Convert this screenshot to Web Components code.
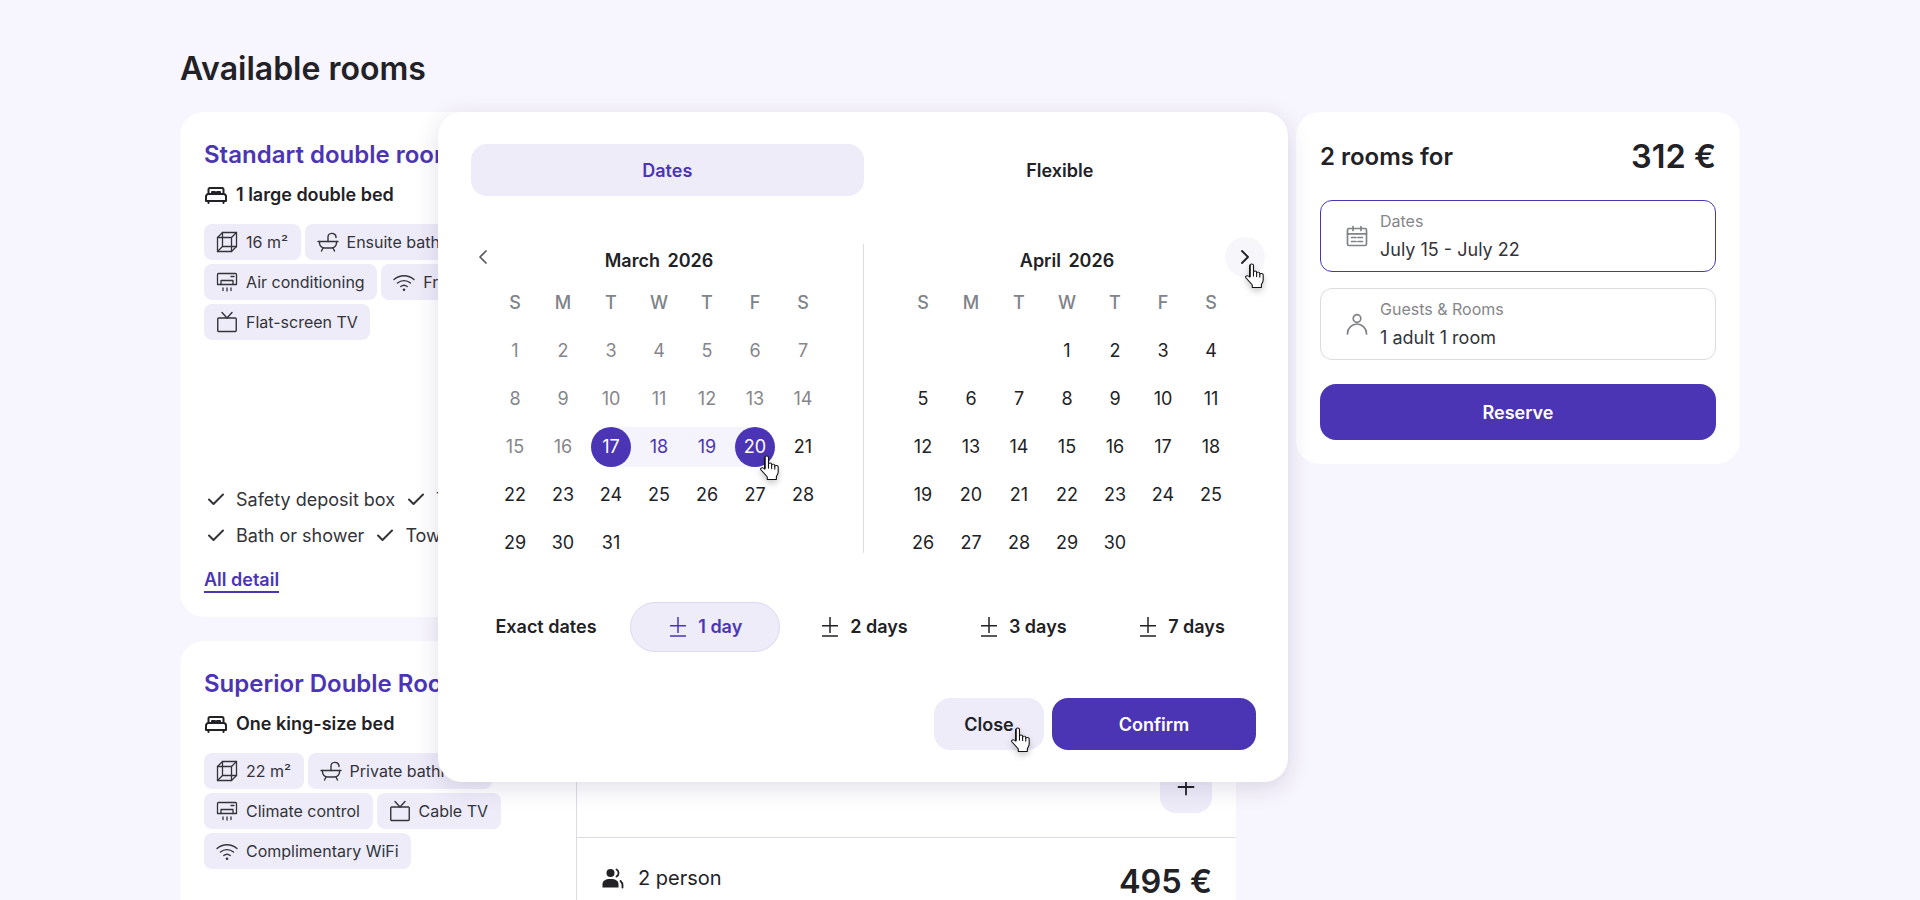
<!DOCTYPE html>
<html lang="en">
<head>
<meta charset="utf-8">
<title>Available rooms</title>
<style>
  html, body {
    margin: 0;
    height: 900px;
    overflow: hidden;
    background: #f7f5fd;
    font-family: Inter, "Liberation Sans", sans-serif;
    color: #222226;
  }
</style>
</head>
<body>
<rooms-page>
  <room-card slot="rooms" name="Standart double room" bed="1 large double bed" tall>
    <room-chip icon="cube">16 m²</room-chip>
    <room-chip icon="bath">Ensuite bathroom</room-chip>
    <room-chip icon="ac">Air conditioning</room-chip>
    <room-chip icon="wifi">Free WiFi</room-chip>
    <room-chip icon="tv">Flat-screen TV</room-chip>
    <room-feature slot="features">Safety deposit box</room-feature>
    <room-feature slot="features">TV</room-feature>
    <room-feature slot="features">Bath or shower</room-feature>
    <room-feature slot="features">Towels</room-feature>
    <rate-row slot="rates"></rate-row>
    <rate-row slot="rates"></rate-row>
  </room-card>
  <room-card slot="rooms" name="Superior Double Room" bed="One king-size bed">
    <room-chip icon="cube">22 m²</room-chip>
    <room-chip icon="bath">Private bathroom</room-chip>
    <room-chip icon="ac">Climate control</room-chip>
    <room-chip icon="tv">Cable TV</room-chip>
    <room-chip icon="wifi">Complimentary WiFi</room-chip>
    <rate-row slot="rates"></rate-row>
    <rate-row slot="rates" people="2 person" price="495 €"></rate-row>
  </room-card>
  <booking-summary slot="side"></booking-summary>
  <date-modal slot="overlay"></date-modal>
</rooms-page>

<script>
const ICONS = {
  bed: `<g stroke-width="2"><path d="M4.500 11V6.500A1.500 1.500 0 0 1 6 5h12a1.500 1.500 0 0 1 1.500 1.500V11"/><path d="M8 11V9h3v2M13 11V9h3v2"/><path d="M2 18v-4.500A2.500 2.500 0 0 1 4.500 11h15a2.500 2.500 0 0 1 2.500 2.500V18z"/><path d="M4.500 18v2M19.500 18v2"/></g>`,
  cube: `<g stroke-width="1.300"><path d="M2.500 7.500h14v14h-14zM7.500 2.500h14v14h-14z"/><path d="M2.500 7.500l5-5M16.500 7.500l5-5M2.500 21.500l5-5M16.500 21.500l5-5"/></g>`,
  bath: `<g stroke-width="1.400"><path d="M2 11.500h20"/><path d="M3.500 11.500v1.500a5 5 0 0 0 5 5h7a5 5 0 0 0 5-5v-1.500"/><path d="M7 18l-1.500 3M17 18l1.500 3"/><path d="M12 11.500V7c0-4.500 7-5 8 -.5v1"/></g>`,
  ac: `<g stroke-width="1.300"><path d="M2.500 4.500a1 1 0 0 1 1-1h17a1 1 0 0 1 1 1v10h-19z"/><path d="M6 14.500v-4h12v4M16 6.500h3"/><path d="M8 18v2.500M12 18v3M16 18v2.500"/></g>`,
  wifi: `<g stroke-width="1.400"><path d="M2 9.500a15 15 0 0 1 20 0M5.500 13a10 10 0 0 1 13 0M8.800 16.500a5 5 0 0 1 6.400 0"/></g><circle cx="12" cy="19.800" r="1.300" fill="currentColor" stroke="none"/>`,
  tv: `<g stroke-width="1.400"><rect x="2.750" y="8" width="18.500" height="13.500" rx="1"/><path d="M7 2.500l5 5.500 5-5.500"/></g>`,
  check: `<path stroke-width="2" d="M5 12.500l4.500 4.500L19 7.500"/>`,
  calendar: `<g stroke-width="1.700"><rect x="2.500" y="4.500" width="19" height="17" rx="1.500"/><path d="M2.500 9.800h19M8 2.500v4M16 2.500v4M6.500 13.500h4.500M13 13.500h4.500M6.500 17.500h4.500M13 17.500h4.500"/></g>`,
  person: `<g stroke-width="1.700"><circle cx="12" cy="6.500" r="3.800"/><path d="M2.500 22v-.5a9.500 9.500 0 0 1 19 0v.5"/></g>`,
  people: `<g fill="currentColor" stroke="none"><circle cx="9.500" cy="7" r="4"/><path d="M1.500 21.500v-3.500c0-3 2.700-5 8-5s8 2 8 5v3.500z"/></g><path stroke-width="1.800" d="M15.500 3.500a4 4 0 0 1 0 7M19.500 15c1.200 1.200 2 2.500 2 4v2.500"/>`,
  plus: `<path stroke-width="1.800" d="M4.500 12h15M12 4.500v15"/>`,
  prev: `<path stroke-width="1.700" d="M15 6l-6 6 6 6"/>`,
  next: `<path stroke-width="1.900" d="M9 6l6 6-6 6"/>`
};

class AppIcon extends HTMLElement {
  constructor() {
    super();
    this.attachShadow({ mode: "open" });
  }

  connectedCallback() {
    const size = this.getAttribute("size") || 24;
    this.shadowRoot.innerHTML = /* html */`
    <style>
      :host { display: block; flex: none; width: ${size}px; height: ${size}px; }
      svg { display: block; fill: none; stroke: currentColor; stroke-linecap: round; stroke-linejoin: round; }
    </style>
    <svg width="${size}" height="${size}" viewBox="0 0 24 24">${ICONS[this.getAttribute("name")]}</svg>`;
  }
}

class RoomsPage extends HTMLElement {
  constructor() {
    super();
    this.attachShadow({ mode: "open" });
  }

  connectedCallback() {
    this.shadowRoot.innerHTML = /* html */`
    <style>
      :host {
        display: block;
        position: relative;
        box-sizing: border-box;
        height: 900px;
        padding: 49px 180px 0;
        overflow: hidden;
      }

      h1 {
        margin: 0 0 23px;
        font-size: 32px;
        line-height: 40px;
        font-weight: 600;
      }

      .layout {
        display: grid;
        grid-template-columns: 1056px 444px;
        column-gap: 60px;
        align-items: start;
      }

      .rooms {
        display: flex;
        flex-direction: column;
        gap: 24px;
      }
    </style>
    <h1>Available rooms</h1>
    <div class="layout">
      <div class="rooms"><slot name="rooms"></slot></div>
      <slot name="side"></slot>
    </div>
    <slot name="overlay"></slot>`;
  }
}

class RoomCard extends HTMLElement {
  constructor() {
    super();
    this.attachShadow({ mode: "open" });
  }

  connectedCallback() {
    this.shadowRoot.innerHTML = /* html */`
    <style>
      :host {
        display: grid;
        grid-template-columns: 396px 1fr;
        background: #fff;
        border-radius: 24px;
        ${this.hasAttribute("tall") ? "min-height: 505px;" : ""}
      }

      .info {
        display: flex;
        flex-direction: column;
        padding: 24px;
        box-sizing: border-box;
      }

      h2 {
        margin: 0;
        font-size: 24px;
        line-height: 38px;
        font-weight: 600;
        color: #4b35b5;
        white-space: nowrap;
      }

      .bed {
        display: flex;
        align-items: center;
        gap: 8px;
        margin-top: 9px;
        font-size: 18px;
        line-height: 24px;
        font-weight: 600;
      }

      .chips {
        display: flex;
        flex-wrap: wrap;
        gap: 4px;
        margin-top: 17px;
      }

      .details { margin-top: auto; }

      .features {
        display: flex;
        flex-wrap: wrap;
        column-gap: 9px;
      }

      a {
        display: inline-block;
        margin-top: 16px;
        color: #4b35b5;
        font-size: 18px;
        line-height: 22px;
        font-weight: 600;
        border-bottom: 2px solid #4b35b5;
      }

      .rates {
        display: flex;
        flex-direction: column;
        border-left: 1px solid #dcdce4;
      }
    </style>
    <div class="info">
      <h2>${this.getAttribute("name")}</h2>
      <div class="bed"><app-icon name="bed"></app-icon>${this.getAttribute("bed")}</div>
      <div class="chips"><slot></slot></div>
      <div class="details" ${this.querySelector("room-feature") ? "" : "hidden"}>
        <div class="features"><slot name="features"></slot></div>
        <a>All detail</a>
      </div>
    </div>
    <div class="rates"><slot name="rates"></slot></div>`;
  }
}

class RoomChip extends HTMLElement {
  constructor() {
    super();
    this.attachShadow({ mode: "open" });
  }

  connectedCallback() {
    this.shadowRoot.innerHTML = /* html */`
    <style>
      :host {
        display: inline-flex;
        align-items: center;
        gap: 7px;
        box-sizing: border-box;
        height: 36px;
        padding: 0 12.5px 0 11px;
        border-radius: 8px;
        background: #eeecf9;
        color: #33343a;
        font-size: 16px;
        white-space: nowrap;
      }
    </style>
    <app-icon name="${this.getAttribute("icon")}"></app-icon><slot></slot>`;
  }
}

class RoomFeature extends HTMLElement {
  constructor() {
    super();
    this.attachShadow({ mode: "open" });
  }

  connectedCallback() {
    this.shadowRoot.innerHTML = /* html */`
    <style>
      :host {
        display: inline-flex;
        align-items: center;
        gap: 8px;
        height: 36px;
        font-size: 18px;
        color: #33343a;
      }
    </style>
    <app-icon name="check"></app-icon><slot></slot>`;
  }
}

class RateRow extends HTMLElement {
  constructor() {
    super();
    this.attachShadow({ mode: "open" });
  }

  connectedCallback() {
    const people = this.getAttribute("people");
    const top = people ? /* html */`
      <div class="people"><app-icon name="people"></app-icon>${people}</div>
      <div class="price">${this.getAttribute("price")}</div>` : "";

    this.shadowRoot.innerHTML = /* html */`
    <style>
      :host {
        display: flex;
        flex-direction: column;
        justify-content: space-between;
        box-sizing: border-box;
        height: 197px;
        padding: 24px;
        border-bottom: 1px solid #dcdce4;
      }

      .top {
        display: flex;
        justify-content: space-between;
        align-items: flex-start;
      }

      .people {
        display: flex;
        align-items: center;
        gap: 13px;
        height: 32px;
        font-size: 20px;
      }

      .price {
        margin-top: 3px;
        font-size: 32.5px;
        line-height: 34px;
        font-weight: 600;
      }

      .add {
        align-self: flex-end;
        display: grid;
        place-items: center;
        width: 52px;
        height: 52px;
        border-radius: 16px;
        background: #eeecf9;
      }
    </style>
    <div class="top">${top}</div>
    <div class="add"><app-icon name="plus"></app-icon></div>`;
  }
}

class BookingField extends HTMLElement {
  constructor() {
    super();
    this.attachShadow({ mode: "open" });
  }

  connectedCallback() {
    const active = this.hasAttribute("active");
    this.shadowRoot.innerHTML = /* html */`
    <style>
      :host {
        display: flex;
        align-items: center;
        gap: 11px;
        box-sizing: border-box;
        height: 72px;
        padding: 0 24px;
        border: 1px solid ${active ? "#4b35b5" : "#dcdce4"};
        border-radius: 12px;
      }

      app-icon { color: #808388; }

      .label {
        font-size: 16px;
        line-height: 20px;
        color: #85868a;
      }

      .value {
        margin-top: 8px;
        font-size: 18px;
        line-height: 22px;
        color: #33343a;
      }
    </style>
    <app-icon name="${this.getAttribute("icon")}"></app-icon>
    <div>
      <div class="label">${this.getAttribute("label")}</div>
      <div class="value">${this.getAttribute("value")}</div>
    </div>`;
  }
}

class BookingSummary extends HTMLElement {
  constructor() {
    super();
    this.attachShadow({ mode: "open" });
  }

  connectedCallback() {
    this.shadowRoot.innerHTML = /* html */`
    <style>
      :host {
        display: flex;
        flex-direction: column;
        gap: 16px;
        box-sizing: border-box;
        padding: 24px;
        background: #fff;
        border-radius: 24px;
      }

      .head {
        display: flex;
        justify-content: space-between;
        align-items: center;
        padding-top: 1px;
        margin-bottom: 7px;
        font-weight: 600;
      }

      .for { font-size: 24px; line-height: 40px; }
      .total { font-size: 32.5px; line-height: 40px; }

      button {
        height: 56px;
        margin-top: 8px;
        border: 0;
        border-radius: 16px;
        background: #4b35b5;
        color: #fff;
        font: 600 18px Inter, sans-serif;
      }
    </style>
    <div class="head"><span class="for">2 rooms for</span><span class="total">312 €</span></div>
    <booking-field active icon="calendar" label="Dates" value="July 15 - July 22"></booking-field>
    <booking-field icon="person" label="Guests &amp; Rooms" value="1 adult 1 room"></booking-field>
    <button>Reserve</button>`;
  }
}

class CalMonth extends HTMLElement {
  constructor() {
    super();
    this.attachShadow({ mode: "open" });
  }

  connectedCallback() {
    const blanks = Number(this.getAttribute("blanks") || 0);
    const total = Number(this.getAttribute("total"));
    const past = Number(this.getAttribute("past") || 0);
    const from = Number(this.getAttribute("from") || 0);
    const to = Number(this.getAttribute("to") || 0);
    const heads = ["S", "M", "T", "W", "T", "F", "S"].map(d => `<div class="cell head">${d}</div>`).join("");
    const empty = "<div class=\"cell\"></div>".repeat(blanks);
    let days = "";

    for (let d = 1; d <= total; d++) {
      const classes = ["cell"];
      if (d <= past) classes.push("past");
      if (d === from) classes.push("from");
      if (d === to) classes.push("to");
      if (d > from && d < to) classes.push("range");
      days += `<div class="${classes.join(" ")}"><span>${d}</span></div>`;
    }

    this.shadowRoot.innerHTML = /* html */`
    <style>
      :host {
        display: block;
        width: 336px;
        padding-top: 5px;
      }

      .title {
        height: 24px;
        margin-bottom: 5.5px;
        text-align: center;
        font-size: 18px;
        line-height: 24px;
        font-weight: 600;
        word-spacing: 3px;
      }

      .grid {
        display: grid;
        grid-template-columns: repeat(7, 48px);
        grid-auto-rows: 48px;
      }

      .cell {
        position: relative;
        display: grid;
        place-items: center;
        font-size: 18px;
        color: #222226;
      }

      .cell span {
        position: relative;
        display: grid;
        place-items: center;
        width: 40px;
        height: 40px;
        border-radius: 50%;
      }

      .head { color: #808388; font-weight: 500; }
      .past { color: #85868a; }

      .range::before, .from::before, .to::before {
        content: "";
        position: absolute;
        top: 4px;
        bottom: 4px;
        left: 0;
        right: 0;
        background: #f5f3fc;
      }

      .from::before { left: 50%; }
      .to::before { right: 50%; }
      .range { color: #4b35b5; }
      .from span, .to span { background: #4b35b5; color: #fff; }
    </style>
    <div class="title">${this.getAttribute("title")}</div>
    <div class="grid">${heads}${empty}${days}</div>`;
  }
}

class HandCursor extends HTMLElement {
  constructor() {
    super();
    this.attachShadow({ mode: "open" });
  }

  connectedCallback() {
    this.shadowRoot.innerHTML = /* html */`
    <style>
      :host {
        position: absolute;
        left: ${this.getAttribute("x")}px;
        top: ${this.getAttribute("y")}px;
        width: 20px;
        height: 26px;
        filter: drop-shadow(0 3px 3px rgba(0, 0, 0, .22));
      }

      svg { display: block; }
    </style>
    <svg width="20" height="26" viewBox="1.500 0 16.500 25.500" preserveAspectRatio="none" fill="#fff" stroke="#111" stroke-width=".9" stroke-linejoin="round" stroke-linecap="round">
      <path d="M5.500 2.500c0-2 3-2 3 0V9c0-1.500 2.600-1.500 2.600 0v1c0-1.400 2.600-1.400 2.600.2v1c0-1.300 2.800-1.200 2.800.4v5c0 2-.7 3-1.500 4.400v3H7.500v-2.500c-1-1.500-2.500-3.300-5-6.500-1.300-1.700.6-3.200 2-2l1 1z"/>
      <path d="M8.500 9v4M11.100 10v3.500M13.700 11v3" fill="none"/>
      <path d="M5.500 2.500V13" fill="none" stroke-width="1.300"/>
    </svg>`;
  }
}

class DateModal extends HTMLElement {
  constructor() {
    super();
    this.attachShadow({ mode: "open" });
  }

  connectedCallback() {
    const pm = `<svg class="pm" width="16" height="20" viewBox="0 0 16 20" fill="none" stroke="currentColor" stroke-width="1.500"><path d="M8 0v16M0 8.750h16M0 19h16"/></svg>`;
    this.shadowRoot.innerHTML = /* html */`
    <style>
      :host {
        position: absolute;
        left: 438px;
        top: 112px;
        width: 850px;
        box-sizing: border-box;
        padding: 32px 32px 32px 33px;
        background: #fff;
        border-radius: 24px;
        box-shadow: 0 6px 24px rgba(40, 30, 90, .14);
      }

      .tabs {
        display: grid;
        grid-template-columns: 1fr 1fr;
        font-size: 18px;
        font-weight: 600;
      }

      .tab {
        display: grid;
        place-items: center;
        height: 52px;
        border-radius: 16px;
      }

      .tab.on { background: #eeecf9; color: #4b35b5; }

      .months {
        display: flex;
        align-items: flex-start;
        margin-top: 48px;
      }

      .left { margin-left: 20px; margin-right: 36px; }
      .divider { flex: none; width: 1px; height: 309px; background: #dcdce4; }
      .right { margin-left: 35px; }

      .nav {
        position: absolute;
        top: 125px;
        display: grid;
        place-items: center;
        width: 40px;
        height: 40px;
        border-radius: 50%;
      }

      .nav.prev { left: 25px; color: #55565c; }
      .nav.next { left: 787px; background: #f7f6fb; }

      .spans {
        display: grid;
        grid-template-columns: repeat(5, 150px);
        column-gap: 8.75px;
        margin-top: 35px;
        font-size: 18px;
        font-weight: 600;
      }

      .span {
        display: flex;
        align-items: center;
        justify-content: center;
        gap: 12px;
        box-sizing: border-box;
        height: 50px;
        border-radius: 25px;
        border: 1px solid transparent;
      }

      .span:has(svg) { padding-left: 3px; }
      .span.on { background: #eeecf9; border-color: #dcd9f1; color: #4b35b5; }

      .actions {
        display: flex;
        justify-content: flex-end;
        gap: 8px;
        margin-top: 46.5px;
      }

      button {
        height: 52px;
        border: 0;
        border-radius: 16px;
        font: 600 18px Inter, sans-serif;
      }

      .close { width: 110px; background: #eeecf9; color: #222226; }
      .confirm { width: 204px; background: #4b35b5; color: #fff; }
    </style>
    <div class="tabs">
      <div class="tab on">Dates</div>
      <div class="tab">Flexible</div>
    </div>
    <div class="months">
      <cal-month class="left" title="March 2026" total="31" past="16" from="17" to="20"></cal-month>
      <div class="divider"></div>
      <cal-month class="right" title="April 2026" blanks="3" total="30"></cal-month>
    </div>
    <div class="nav prev"><app-icon name="prev"></app-icon></div>
    <div class="nav next"><app-icon name="next"></app-icon></div>
    <div class="spans">
      <div class="span">Exact dates</div>
      <div class="span on">${pm}1 day</div>
      <div class="span">${pm}2 days</div>
      <div class="span">${pm}3 days</div>
      <div class="span">${pm}7 days</div>
    </div>
    <div class="actions">
      <button class="close">Close</button>
      <button class="confirm">Confirm</button>
    </div>
    <hand-cursor x="807" y="151"></hand-cursor>
    <hand-cursor x="322" y="343"></hand-cursor>
    <hand-cursor x="573" y="615"></hand-cursor>`;
  }
}

customElements.define("app-icon", AppIcon);
customElements.define("room-chip", RoomChip);
customElements.define("room-feature", RoomFeature);
customElements.define("rate-row", RateRow);
customElements.define("room-card", RoomCard);
customElements.define("booking-field", BookingField);
customElements.define("booking-summary", BookingSummary);
customElements.define("cal-month", CalMonth);
customElements.define("hand-cursor", HandCursor);
customElements.define("date-modal", DateModal);
customElements.define("rooms-page", RoomsPage);
</script>
</body>
</html>
